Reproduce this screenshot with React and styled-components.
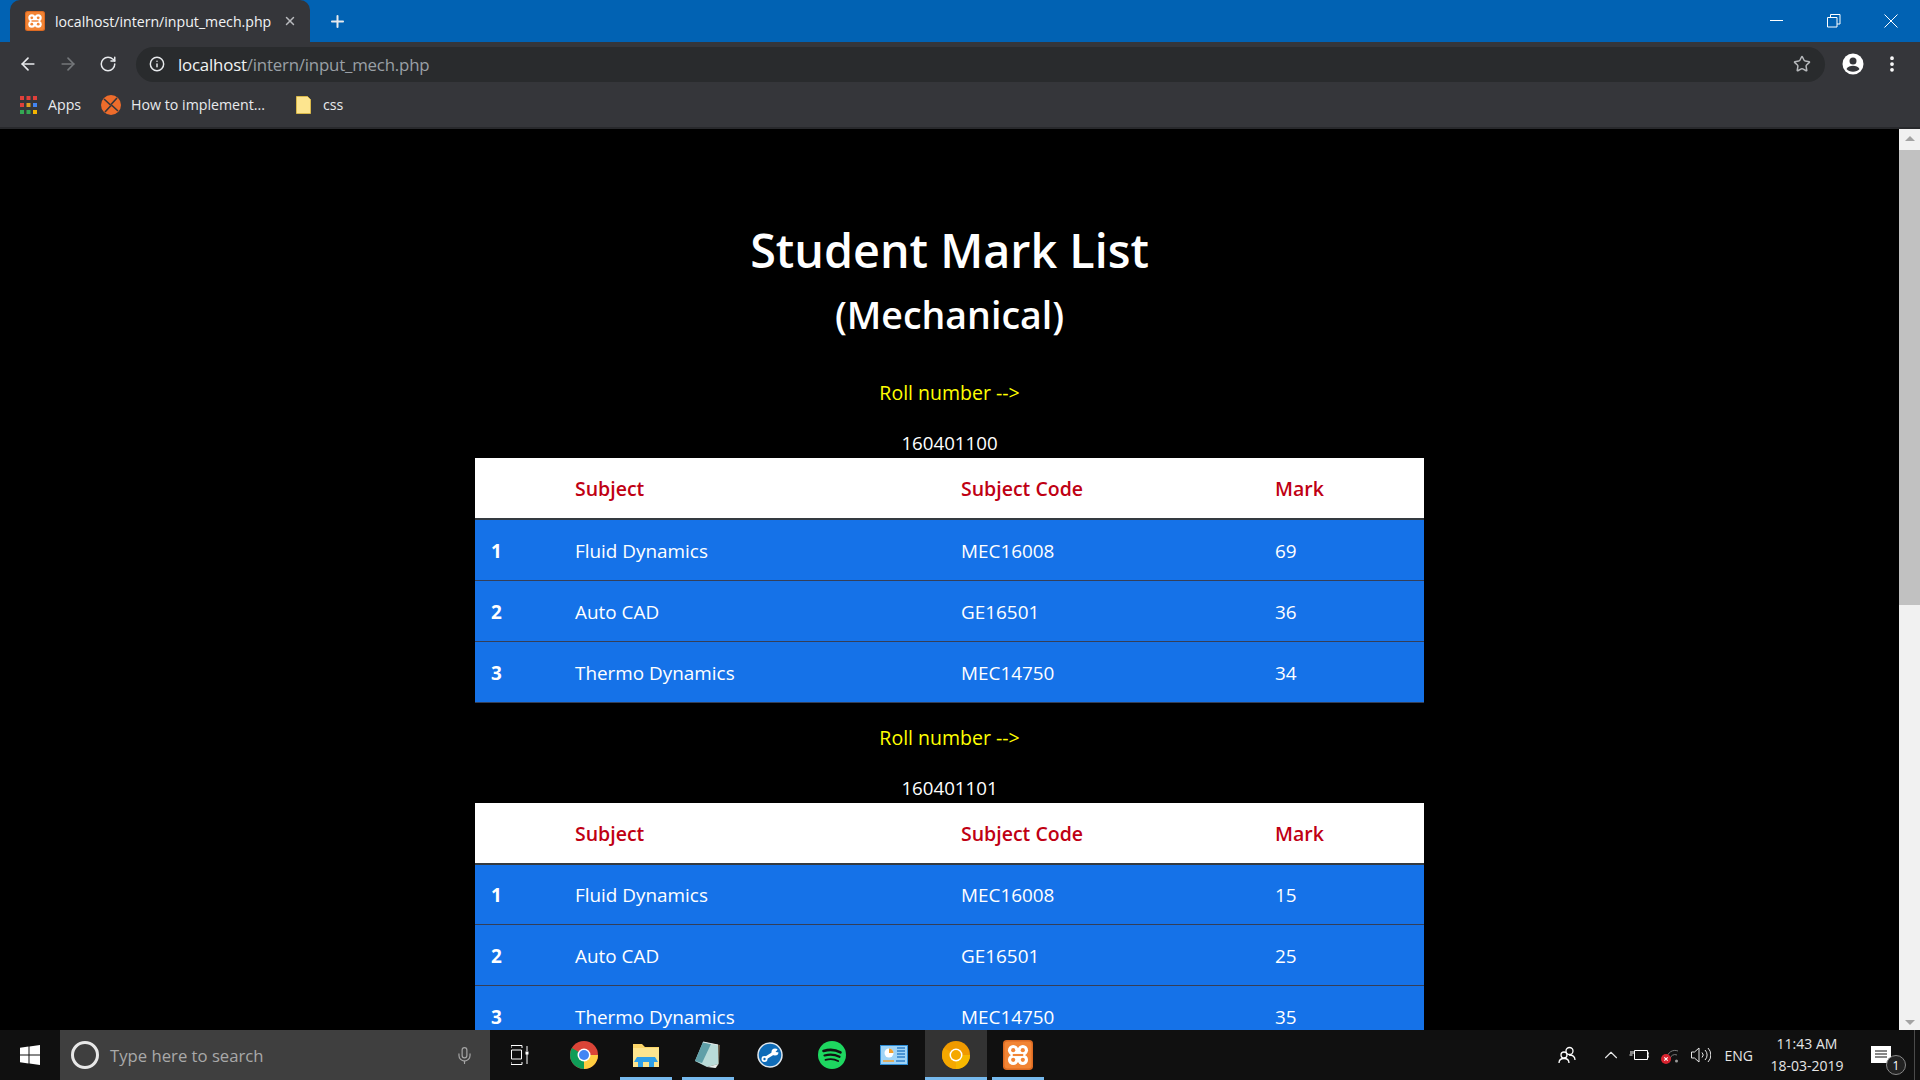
import styled, { createGlobalStyle } from "styled-components"
import { ArrowLeft, ArrowRight, RotateCw, Info, Star, Plus, X, Mic, ChevronUp, EllipsisVertical } from "lucide-react"

const marks = [
  { roll: "160401100", values: [69, 36, 34] },
  { roll: "160401101", values: [15, 25, 35] },
]

const subjects = [
  { name: "Fluid Dynamics", code: "MEC16008" },
  { name: "Auto CAD", code: "GE16501" },
  { name: "Thermo Dynamics", code: "MEC14750" },
]

function XamppIcon({ size }) {
  return (
    <svg width={size} height={size} viewBox="0 0 20 20">
      <rect width="20" height="20" rx="2.5" fill="#dd6a22" />
      <rect x="1" y="1" width="18" height="18" rx="2" fill="#f28434" />
      <g fill="#fff">
        <circle cx="6.800" cy="6.800" r="3.500" />
        <circle cx="13.200" cy="6.800" r="3.500" />
        <circle cx="6.800" cy="13.200" r="3.500" />
        <circle cx="13.200" cy="13.200" r="3.500" />
        <rect x="7" y="6" width="6" height="8" />
      </g>
      <g fill="#f28434">
        <circle cx="6.800" cy="6.800" r="1.400" />
        <circle cx="13.200" cy="6.800" r="1.400" />
        <circle cx="6.800" cy="13.200" r="1.400" />
        <circle cx="13.200" cy="13.200" r="1.400" />
        <rect x="6.500" y="9.300" width="7" height="1.400" />
      </g>
    </svg>
  )
}

function ChromeIcon({ colors }) {
  return (
    <svg width="28" height="28" viewBox="0 0 28 28">
      <circle cx="14" cy="14" r="14" fill={colors[0]} />
      <path d="M14 14L1.900 7A14 14 0 0 0 14 28z" fill={colors[1]} />
      <path d="M14 14h14A14 14 0 0 1 14 28z" fill={colors[2]} />
      <circle cx="14" cy="14" r="6.500" fill="#fff" />
      <circle cx="14" cy="14" r="5" fill={colors[3]} />
    </svg>
  )
}

function FolderIcon() {
  return (
    <svg width="28" height="26" viewBox="0 0 28 26">
      <path d="M1 2h9l3 3h14v20H1z" fill="#fbd568" />
      <path d="M1 6h26v19H1z" fill="#fde58f" />
      <path d="M5 15h18l3 5h-4v5H6v-5H2z" fill="#2f9fe8" />
      <rect x="11" y="20" width="6" height="5" fill="#fde58f" />
    </svg>
  )
}

function NotepadIcon() {
  return (
    <svg width="28" height="28" viewBox="0 0 28 28">
      <path d="M9 1l17 3-1 18-3 5-9-3z" fill="#6b5a45" />
      <path d="M9 1l15 3 .5 19L13 26 1 20z" fill="#b9dbd8" />
      <path d="M9 1l8 2-9 19-7-2z" fill="#5f9fa8" />
      <path d="M13 26l11.500-3-3 4z" fill="#e6eeee" />
      <path d="M9 1l15 3" stroke="#dfe8e8" strokeWidth="1.200" />
    </svg>
  )
}

function WrenchIcon() {
  return (
    <svg width="26" height="26" viewBox="0 0 26 26">
      <circle cx="13" cy="13" r="12" fill="#0f6cb8" stroke="#dfe8ef" strokeWidth="1.500" />
      <path d="M8 16.500l9.500-6" stroke="#fff" strokeWidth="3" />
      <circle cx="7.500" cy="17" r="3" fill="#fff" />
      <circle cx="7.500" cy="17" r="1.200" fill="#0f6cb8" />
      <circle cx="18" cy="10" r="3.500" fill="#fff" />
      <path d="M18.500 10l3-3.500 1 4z" fill="#0f6cb8" />
    </svg>
  )
}

function SpotifyIcon() {
  return (
    <svg width="28" height="28" viewBox="0 0 28 28">
      <circle cx="14" cy="14" r="14" fill="#1ed760" />
      <path d="M5.500 10c6-1.800 12-1.300 17 1.300" fill="none" stroke="#111" strokeWidth="2.600" strokeLinecap="round" />
      <path d="M6.500 14.500c5-1.400 10.500-1 15 1.300" fill="none" stroke="#111" strokeWidth="2.200" strokeLinecap="round" />
      <path d="M7.500 18.800c4.500-1.100 9-.8 12.600 1.200" fill="none" stroke="#111" strokeWidth="1.900" strokeLinecap="round" />
    </svg>
  )
}

function ControlIcon() {
  return (
    <svg width="28" height="20" viewBox="0 0 28 20">
      <rect width="28" height="20" fill="#2f8fd8" />
      <rect x="1" y="1" width="26" height="18" fill="#9fd4f7" />
      <circle cx="9" cy="8" r="4.500" fill="#fff" />
      <path d="M9 8V3.500A4.500 4.500 0 0 1 13.500 8z" fill="#f0a030" />
      <path d="M17 3h8M17 6h8M17 9h8M17 12h8" stroke="#2f7fc8" strokeWidth="1.500" />
      <path d="M3 16h11" stroke="#f0a030" strokeWidth="1.500" />
      <path d="M16 16h9" stroke="#2f7fc8" strokeWidth="1.500" />
    </svg>
  )
}

export default function App() {
  return (
    <>
      <GlobalStyle />
      <Screen>
        <TitleBar>
          <Tab>
            <XamppIcon size={20} />
            <TabTitle>localhost/intern/input_mech.php</TabTitle>
            <X size={14} color="#b8babd" strokeWidth={2.5} />
          </Tab>
          <NewTab>
            <Plus size={19} color="#e8eaed" strokeWidth={2.5} />
          </NewTab>
          <WindowButtons>
            <svg width="14" height="14" viewBox="0 0 14 14"><path d="M0 6.500h13" stroke="#fff" /></svg>
            <svg width="14" height="14" viewBox="0 0 14 14"><path d="M.5 3.500h9.500v9.500H.5zM3.500 3.500V.5H13v9.500h-3" fill="none" stroke="#fff" /></svg>
            <svg width="14" height="14" viewBox="0 0 14 14"><path d="M.5.500l13 13M13.500.500l-13 13" stroke="#fff" /></svg>
          </WindowButtons>
        </TitleBar>

        <Toolbar>
          <NavButton><ArrowLeft size={20} color="#e8eaed" strokeWidth={2} /></NavButton>
          <NavButton><ArrowRight size={20} color="#74777a" strokeWidth={2} /></NavButton>
          <NavButton><RotateCw size={18} color="#e8eaed" strokeWidth={2} /></NavButton>
          <Omnibox>
            <Info size={16} color="#e8eaed" strokeWidth={2.2} />
            <Url>localhost<UrlPath>/intern/input_mech.php</UrlPath></Url>
            <Star size={18} color="#b6b8bb" strokeWidth={2} />
          </Omnibox>
          <AccountIcon width="22" height="22" viewBox="0 0 22 22">
            <circle cx="11" cy="11" r="10.500" fill="#fff" />
            <circle cx="11" cy="8" r="3.500" fill="#35363a" />
            <path d="M4.500 16c1-2.500 4-3.300 6.500-3.300s5.500.8 6.500 3.300c-1.500 1.800-3.800 2.800-6.500 2.800s-5-1-6.500-2.800z" fill="#35363a" />
          </AccountIcon>
          <EllipsisVertical size={20} color="#fff" strokeWidth={2.5} />
        </Toolbar>

        <BookmarkBar>
          <Bookmark $gap={11}>
            <svg width="17" height="18" viewBox="0 0 17 18">
              <path d="M0 0h4v4H0zM6.500 0h4v4h-4zM13 0h4v4h-4z" fill="#e0403a" />
              <path d="M0 7h4v4H0z" fill="#e0403a" />
              <path d="M6.500 7h4v4h-4z" fill="#e0a020" />
              <path d="M13 7h4v4h-4z" fill="#4285f4" />
              <path d="M0 14h4v4H0zM6.500 14h4v4h-4z" fill="#34a853" />
              <path d="M13 14h4v4h-4z" fill="#f4b400" />
            </svg>
            Apps
          </Bookmark>
          <Bookmark $gap={10} $left={20}>
            <svg width="20" height="20" viewBox="0 0 20 20">
              <circle cx="10" cy="10" r="10" fill="#ee6c2b" />
              <path d="M3 4l6.500 6M16 3l-6 6.500M17 16l-6.500-6M4 17l6-6.500" stroke="#35363a" strokeWidth="1.600" fill="none" />
            </svg>
            How to implement...
          </Bookmark>
          <Bookmark $gap={12} $left={31}>
            <svg width="15" height="18" viewBox="0 0 15 18">
              <path d="M.5.500h11l3 3v14H.5z" fill="#fde58f" stroke="#d9b84a" />
            </svg>
            css
          </Bookmark>
        </BookmarkBar>

        <Viewport>
          <Page>
            <Heading>Student Mark List</Heading>
            <SubHeading>(Mechanical)</SubHeading>
            {marks.map((student) => (
              <Section key={student.roll}>
                <RollLabel>Roll number --&gt;</RollLabel>
                <RollValue>{student.roll}</RollValue>
                <MarkTable>
                  <thead>
                    <tr>
                      <HeadCell $width={100} />
                      <HeadCell $width={386}>Subject</HeadCell>
                      <HeadCell $width={314}>Subject Code</HeadCell>
                      <HeadCell>Mark</HeadCell>
                    </tr>
                  </thead>
                  <tbody>
                    {subjects.map((subject, i) => (
                      <tr key={subject.code}>
                        <IndexCell>{i + 1}</IndexCell>
                        <Cell>{subject.name}</Cell>
                        <Cell>{subject.code}</Cell>
                        <Cell>{student.values[i]}</Cell>
                      </tr>
                    ))}
                  </tbody>
                </MarkTable>
              </Section>
            ))}
          </Page>
          <Scrollbar>
            <ScrollArrow />
            <ScrollThumb />
            <ScrollSpace />
            <ScrollArrow $down />
          </Scrollbar>
        </Viewport>

        <Taskbar>
          <StartButton>
            <svg width="20" height="20" viewBox="0 0 20 20">
              <path d="M0 2.800l8.500-1.200v8H0zM9.500 1.400L20 0v9.600H9.500zM0 10.500h8.500v8L0 17.200zM9.500 10.500H20V20L9.500 18.600z" fill="#fff" />
            </svg>
          </StartButton>
          <SearchBox>
            <Cortana />
            <SearchText>Type here to search</SearchText>
            <Mic size={19} color="#a5a5a5" strokeWidth={1.5} />
          </SearchBox>
          <TaskView>
            <svg width="18" height="20" viewBox="0 0 18 20">
              <path d="M0 .5h11M.5 5h10v9H.5zM0 19.500h11M0 3V.5M11 3V.5M0 17v2.500M11 17v2.500M16 1v5M16 9v10" fill="none" stroke="#fff" />
              <rect x="14.500" y="6.500" width="3" height="3" fill="#fff" />
            </svg>
          </TaskView>
          <TaskSlot><ChromeIcon colors={["#db4437", "#0f9d58", "#ffcd40", "#4285f4"]} /></TaskSlot>
          <TaskSlot $open><FolderIcon /></TaskSlot>
          <TaskSlot $open><NotepadIcon /></TaskSlot>
          <TaskSlot><WrenchIcon /></TaskSlot>
          <TaskSlot><SpotifyIcon /></TaskSlot>
          <TaskSlot><ControlIcon /></TaskSlot>
          <TaskSlot $open $active><ChromeIcon colors={["#f09a00", "#f5a800", "#f6b800", "#f5a800"]} /></TaskSlot>
          <TaskSlot $open><XamppIcon size={30} /></TaskSlot>

          <Tray>
            <PeopleIcon width="18" height="18" viewBox="0 0 18 18">
              <circle cx="11.500" cy="5" r="3.500" fill="none" stroke="#fff" strokeWidth="1.300" />
              <circle cx="6" cy="9" r="3" fill="#101010" stroke="#fff" strokeWidth="1.300" />
              <path d="M1 17c0-3 2-4.500 5-4.500s5 1.500 5 4.500M11 9c3 0 6 1 6 5" fill="none" stroke="#fff" strokeWidth="1.300" />
            </PeopleIcon>
            <Chevron size={22} color="#e6e6e6" strokeWidth={1.2} />
            <svg width="20" height="14" viewBox="0 0 20 14">
              <path d="M5.500 2.500h13v9h-13zM18.500 5h1.500v4h-1.500M.5 7h3M2 3v3M4 3v3" fill="none" stroke="#fff" />
            </svg>
            <NetworkIcon width="18" height="18" viewBox="0 0 18 18">
              <path d="M6 12a8 8 0 0 1 11-7M9 13a5 5 0 0 1 7-4" fill="none" stroke="#7a7a7a" />
              <circle cx="15.500" cy="15" r="1.500" fill="#9a9a9a" />
              <circle cx="5" cy="13" r="5" fill="#d8232f" />
              <path d="M3.300 11.300l3.400 3.400M6.700 11.300l-3.400 3.400" stroke="#fff" strokeWidth="1.100" />
            </NetworkIcon>
            <svg width="20" height="16" viewBox="0 0 20 16">
              <path d="M.5 5h3L8 1v14l-4.500-4h-3zM11 5.500a3.500 3.500 0 0 1 0 5M14 3a7 7 0 0 1 0 10M17 1a10 10 0 0 1 0 14" fill="none" stroke="#e6e6e6" />
            </svg>
            <TrayText>ENG</TrayText>
            <Clock>
              <span>11:43 AM</span>
              <span>18-03-2019</span>
            </Clock>
            <Notifications>
              <svg width="20" height="18" viewBox="0 0 20 18">
                <path d="M0 0h20v17H0z" fill="#fff" />
                <path d="M4 5h12M4 8h12M4 11h12" stroke="#101010" strokeWidth="1.200" />
              </svg>
              <NotificationBadge>1</NotificationBadge>
            </Notifications>
          </Tray>
        </Taskbar>
      </Screen>
    </>
  )
}

const GlobalStyle = createGlobalStyle`
  * {
    box-sizing: border-box;
  }
  html, body {
    margin: 0;
    height: 100%;
    overflow: hidden;
    background: #000;
  }
  body {
    font-family: "Open Sans", "Noto Sans", sans-serif;
  }
`
const Screen = styled.div`
  display: flex;
  flex-direction: column;
  width: 1920px;
  height: 1080px;
`
const TitleBar = styled.div`
  display: flex;
  align-items: flex-end;
  flex-shrink: 0;
  height: 42px;
  padding-left: 10px;
  background-color: #0162b3;
`
const Tab = styled.div`
  display: flex;
  align-items: center;
  width: 300px;
  height: 42px;
  padding: 0 13px 0 15px;
  border-radius: 10px 10px 0 0;
  background-color: #35363a;
`
const TabTitle = styled.span`
  flex: 1;
  margin-left: 10px;
  color: #f1f3f4;
  font-size: 14.15px;
  white-space: nowrap;
`
const NewTab = styled.div`
  display: flex;
  align-items: center;
  justify-content: center;
  width: 54px;
  height: 42px;
`
const WindowButtons = styled.div`
  display: flex;
  align-items: center;
  gap: 43px;
  height: 42px;
  margin-left: auto;
  padding-right: 22px;
`
const Toolbar = styled.div`
  display: flex;
  align-items: center;
  flex-shrink: 0;
  height: 43px;
  padding-left: 8px;
  padding-top: 1px;
  background-color: #35363a;
`
const NavButton = styled.div`
  display: flex;
  align-items: center;
  justify-content: center;
  width: 40px;
  height: 36px;
`
const Omnibox = styled.div`
  display: flex;
  align-items: center;
  width: 1689px;
  height: 35px;
  margin-left: 8px;
  padding: 0 14px 0 13px;
  border-radius: 18px;
  background-color: #292b2d;
`
const Url = styled.span`
  flex: 1;
  margin-left: 13px;
  color: #f1f3f4;
  font-size: 16.85px;
  letter-spacing: -0.2px;
`
const UrlPath = styled.span`
  color: #9aa0a6;
`
const AccountIcon = styled.svg`
  margin-left: 17px;
  margin-right: 18px;
`
const BookmarkBar = styled.div`
  display: flex;
  align-items: center;
  flex-shrink: 0;
  height: 44px;
  padding: 0 0 3px 20px;
  border-bottom: 2px solid #28292c;
  background-color: #35363a;
`
const Bookmark = styled.div`
  display: flex;
  align-items: center;
  gap: ${(props) => props.$gap}px;
  margin-left: ${(props) => props.$left || 0}px;
  color: #e8eaed;
  font-size: 14.2px;
`
const Viewport = styled.div`
  display: flex;
  flex: 1;
  min-height: 0;
  overflow: hidden;
  background-color: #000;
`
const Page = styled.main`
  flex: 1;
  min-width: 0;
  padding-top: 91px;
  color: #fff;
  text-align: center;
`
const Heading = styled.h1`
  margin: 0;
  font-size: 46.7px;
  font-weight: 600;
  line-height: 60px;
`
const SubHeading = styled.h2`
  margin: 10px 0 38px;
  font-size: 37.5px;
  font-weight: 600;
  line-height: 50px;
`
const Section = styled.section`
  margin-bottom: 20px;
`
const RollLabel = styled.p`
  margin: 0 0 20px;
  color: #ff0;
  font-size: 19.5px;
  line-height: 30px;
`
const RollValue = styled.p`
  margin: 0;
  font-size: 18.7px;
  line-height: 30px;
`
const MarkTable = styled.table`
  width: 949px;
  margin: 0 auto;
  table-layout: fixed;
  border-collapse: collapse;
  text-align: left;
  font-size: 18.9px;
`
const HeadCell = styled.th`
  width: ${(props) => (props.$width ? `${props.$width}px` : "auto")};
  height: 61px;
  padding: 1px 0 0;
  border-bottom: 2px solid #343a40;
  background-color: #fff;
  color: #bf0013;
  font-size: 19.5px;
  font-weight: 600;
`
const Cell = styled.td`
  height: 61px;
  padding: 2px 0 0;
  border-bottom: 1px solid #343f58;
  background-color: #1572e8;
  color: #fff;
`
const IndexCell = styled(Cell)`
  padding-left: 16px;
  font-weight: 700;
`
const Scrollbar = styled.div`
  display: flex;
  flex-direction: column;
  flex-shrink: 0;
  width: 21px;
  background-color: #f1f1f1;
`
const ScrollArrow = styled.div`
  flex-shrink: 0;
  height: 17px;
  &::after {
    content: "";
    display: block;
    width: 0;
    margin: 7px auto 0;
    border-left: 5.5px solid transparent;
    border-right: 5.5px solid transparent;
    border-${(props) => (props.$down ? "top" : "bottom")}: 5px solid #a3a3a3;
  }
`
const ScrollThumb = styled.div`
  flex-shrink: 0;
  height: 455px;
  margin-top: 4px;
  background-color: #c1c1c1;
`
const ScrollSpace = styled.div`
  flex: 1;
`
const Taskbar = styled.footer`
  display: flex;
  align-items: stretch;
  flex-shrink: 0;
  height: 50px;
  background-color: #101010;
`
const StartButton = styled.div`
  display: flex;
  align-items: center;
  justify-content: center;
  width: 60px;
`
const SearchBox = styled.div`
  display: flex;
  align-items: center;
  width: 430px;
  padding: 0 16px 0 11px;
  background-color: #3f3f3f;
`
const Cortana = styled.div`
  width: 28px;
  height: 28px;
  border: 3px solid #e8e8e8;
  border-radius: 50%;
`
const SearchText = styled.span`
  flex: 1;
  margin-left: 11px;
  color: #a9a9a9;
  font-size: 16.7px;
`
const TaskView = styled.div`
  display: flex;
  align-items: center;
  justify-content: center;
  width: 63px;
  padding-right: 4px;
`
const TaskSlot = styled.div`
  display: flex;
  align-items: center;
  justify-content: center;
  width: 62px;
  background-color: ${(props) => (props.$active ? "#333" : "transparent")};
  box-shadow: ${(props) => (props.$open ? "inset 0 -3px 0 #76b9ed" : "none")};
  clip-path: ${(props) => (props.$active ? "none" : "inset(0 5px)")};
`
const Tray = styled.div`
  display: flex;
  align-items: center;
  gap: 14px;
  margin-left: auto;
  padding-right: 5px;
  color: #e6e6e6;
`
const PeopleIcon = styled.svg`
  margin-right: 10px;
`
const Chevron = styled(ChevronUp)`
  margin-right: -7px;
`
const NetworkIcon = styled.svg`
  margin-left: -2px;
  margin-right: -2px;
`
const TrayText = styled.span`
  font-size: 14px;
`
const Clock = styled.div`
  display: flex;
  flex-direction: column;
  align-items: center;
  gap: 4px;
  width: 80px;
  font-size: 14px;
  line-height: 18px;
`
const Notifications = styled.div`
  position: relative;
  display: flex;
  align-items: center;
  width: 54px;
  height: 100%;
  padding-left: 10px;
  border-right: 1px solid #4a4a4a;
`
const NotificationBadge = styled.span`
  position: absolute;
  left: 25px;
  top: 25px;
  display: flex;
  align-items: center;
  justify-content: center;
  width: 20px;
  height: 20px;
  border: 1px solid #888;
  border-radius: 50%;
  background-color: #222;
  color: #fff;
  font-size: 12px;
`
